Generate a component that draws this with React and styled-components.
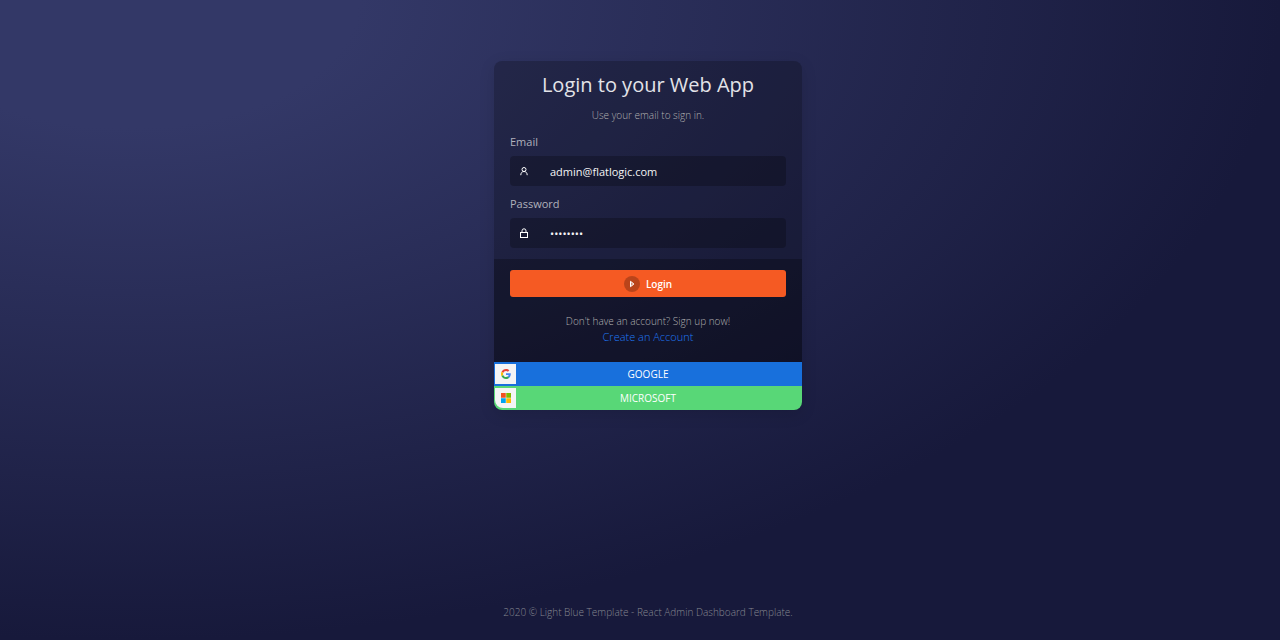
import React from "react";
import styled, { createGlobalStyle } from "styled-components";

const GlobalStyle = createGlobalStyle`
  *, *::before, *::after { box-sizing: border-box; }
  body {
    margin: 0;
    font-family: "Open Sans", "Liberation Sans", sans-serif;
    font-size: 11px;
    line-height: 16px;
    color: #f4f4f5;
    background: #17193b;
  }
  button, input { font: inherit; color: inherit; }
`;

const Page = styled.div`
  min-height: 100vh;
  display: flex;
  flex-direction: column;
  align-items: center;
  justify-content: space-between;
  padding: 61px 0 20px 16px;
  background: radial-gradient(farthest-side ellipse at 10% 0, #333867 20%, #17193b);
`;

const Card = styled.main`
  width: 100%;
  max-width: 308px;
  border-radius: 8px;
  overflow: hidden;
  background: rgba(0, 0, 0, 0.24);
  box-shadow: 0 4px 16px rgba(0, 0, 0, 0.12);
`;

const Fields = styled.div`
  display: flex;
  flex-direction: column;
  gap: 10px;
  padding: 10px 16px 11px;
`;

const Heading = styled.header`
  padding-bottom: 1px;
`;

const Title = styled.h1`
  margin: 0 0 8px;
  font-size: 20px;
  line-height: 28px;
  font-weight: 400;
  text-align: center;
  color: #e3e3e8;
`;

const Note = styled.p`
  margin: 0;
  font-size: 10px;
  font-weight: 300;
  text-align: center;
  color: #b0b0b0;
`;

const Field = styled.div`
  display: flex;
  flex-direction: column;
  gap: 6px;
`;

const Label = styled.label`
  color: #b0b1bb;
`;

const InputBox = styled.div`
  display: flex;
  align-items: center;
  height: 30px;
  padding-left: 9px;
  border-radius: 4px;
  background: rgba(0, 0, 0, 0.24);
`;

const Input = styled.input`
  flex: 1;
  min-width: 0;
  height: 30px;
  margin-left: 21px;
  padding: 0 10px 0 0;
  border: 0;
  outline: 0;
  background: transparent;
`;

const Actions = styled.div`
  padding: 11px 16px 17px;
  background: rgba(0, 0, 0, 0.26);
`;

const LoginButton = styled.button`
  display: flex;
  align-items: center;
  justify-content: center;
  gap: 6px;
  width: 100%;
  height: 27px;
  margin-bottom: 16px;
  padding: 0;
  border: 0;
  border-radius: 3px;
  background: #f55a23;
  color: #fff;
  font-size: 10px;
  font-weight: 600;
  cursor: pointer;
`;

const PlayBadge = styled.span`
  display: flex;
  align-items: center;
  justify-content: center;
  width: 16px;
  height: 16px;
  border-radius: 50%;
  background: rgba(0, 0, 0, 0.24);
`;

const CreateLink = styled.a`
  display: block;
  font-weight: 300;
  text-align: center;
  text-decoration: none;
  color: #1f78f5;
`;

const SocialButton = styled.button`
  display: grid;
  grid-template-columns: 21px 1fr 21px;
  align-items: center;
  width: 100%;
  height: 24px;
  padding: 0 1px;
  border: 0;
  background: ${(p) => p.$color};
  color: #fff;
  font-size: 10px;
  cursor: pointer;
`;

const LogoTile = styled.span`
  display: flex;
  align-items: center;
  justify-content: center;
  height: 20px;
  border-radius: ${(p) => (p.$last ? "0 0 0 8px" : "0")};
  background: #f4f4f5;
`;

const Footer = styled.footer`
  font-size: 10px;
  font-weight: 300;
  text-align: center;
  color: #858790;
`;

const UserIcon = () => (
  <svg width="10" height="10" viewBox="0 0 10 10" fill="none" stroke="#fff" aria-hidden="true">
    <circle cx="5" cy="3.5" r="2" />
    <path d="M1.800 9.200C1.800 7 2.900 5.500 5 5.500S8.200 7 8.200 9.200" />
  </svg>
);

const LockIcon = () => (
  <svg width="10" height="10" viewBox="0 0 10 10" fill="none" stroke="#fff" aria-hidden="true">
    <rect x="1.500" y="4.500" width="7" height="5" />
    <path d="M3 4.500V2.800a2 2 0 0 1 4 0V4.500" />
  </svg>
);

const PlayIcon = () => (
  <svg width="6" height="8" viewBox="0 0 6 8" fill="#fff" fillOpacity="0.4" stroke="#fff" aria-hidden="true">
    <path d="M1.500 1.300v5.400L4.900 4z" />
  </svg>
);

const GoogleLogo = () => (
  <svg width="10" height="10" viewBox="0 0 48 48" aria-hidden="true">
    <path fill="#EA4335" d="M24 9.500c3.540 0 6.710 1.220 9.210 3.600l6.850-6.850C35.900 2.380 30.470 0 24 0 14.620 0 6.510 5.380 2.560 13.220l7.980 6.190C12.430 13.720 17.740 9.500 24 9.500z" />
    <path fill="#4285F4" d="M46.980 24.550c0-1.570-.15-3.090-.38-4.550H24v9.020h12.940c-.58 2.960-2.260 5.480-4.780 7.180l7.730 6c4.510-4.180 7.090-10.360 7.090-17.650z" />
    <path fill="#FBBC05" d="M10.530 28.590c-.48-1.450-.76-2.990-.76-4.590s.27-3.140.76-4.590l-7.980-6.190C.92 16.460 0 20.120 0 24c0 3.880.92 7.540 2.560 10.780l7.970-6.190z" />
    <path fill="#34A853" d="M24 48c6.480 0 11.930-2.130 15.890-5.810l-7.730-6c-2.150 1.450-4.920 2.300-8.160 2.300-6.260 0-11.570-4.220-13.470-9.910l-7.980 6.190C6.510 42.620 14.620 48 24 48z" />
  </svg>
);

const MicrosoftLogo = () => (
  <svg width="10" height="10" viewBox="0 0 21 21" aria-hidden="true">
    <path fill="#f25022" d="M0 0h10v10H0z" />
    <path fill="#7fba00" d="M11 0h10v10H11z" />
    <path fill="#00a4ef" d="M0 11h10v10H0z" />
    <path fill="#ffb900" d="M11 11h10v10H11z" />
  </svg>
);

export default function App() {
  return (
    <>
      <GlobalStyle />
      <Page>
        <Card>
          <form onSubmit={(e) => e.preventDefault()}>
            <Fields>
              <Heading>
                <Title>Login to your Web App</Title>
                <Note>Use your email to sign in.</Note>
              </Heading>
              <Field>
                <Label htmlFor="email">Email</Label>
                <InputBox>
                  <UserIcon />
                  <Input id="email" type="email" defaultValue="admin@flatlogic.com" />
                </InputBox>
              </Field>
              <Field>
                <Label htmlFor="password">Password</Label>
                <InputBox>
                  <LockIcon />
                  <Input id="password" type="password" defaultValue="password" />
                </InputBox>
              </Field>
            </Fields>
            <Actions>
              <LoginButton type="submit">
                <PlayBadge>
                  <PlayIcon />
                </PlayBadge>
                Login
              </LoginButton>
              <Note>Don't have an account? Sign up now!</Note>
              <CreateLink href="#register">Create an Account</CreateLink>
            </Actions>
            <SocialButton type="button" $color="#1870dc">
              <LogoTile>
                <GoogleLogo />
              </LogoTile>
              GOOGLE
            </SocialButton>
            <SocialButton type="button" $color="#58d777">
              <LogoTile $last>
                <MicrosoftLogo />
              </LogoTile>
              MICROSOFT
            </SocialButton>
          </form>
        </Card>
        <Footer>2020 © Light Blue Template - React Admin Dashboard Template.</Footer>
      </Page>
    </>
  );
}
